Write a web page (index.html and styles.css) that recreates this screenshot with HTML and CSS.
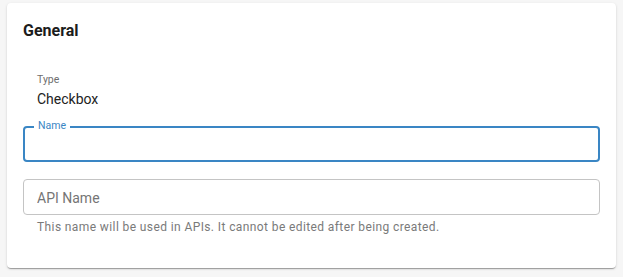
FILE: index.html
```html
<!DOCTYPE html>
<html>
<head>
<meta charset="utf-8">
<link rel="stylesheet" href="styles.css">
</head>
<body>
<div class="card">
  <h2 class="title">General</h2>
  <div class="static">
    <div class="static-label">Type</div>
    <div class="static-value">Checkbox</div>
  </div>
  <div class="field focused">
    <span class="field-label">Name</span>
    <input class="field-input" type="text">
  </div>
  <div class="field plain">
    <input class="field-input" type="text" placeholder="API Name">
  </div>
  <div class="helper">This name will be used in APIs. It cannot be edited after being created.</div>
</div>
</body>
</html>
```
FILE: styles.css
```css
html, body {
  margin: 0;
  padding: 0;
  background: #f6f6f6;
  font-family: Roboto, "Liberation Sans", Arial, sans-serif;
}
body {
  padding: 3px 7px;
}
.card {
  box-sizing: border-box;
  width: 609px;
  height: 265px;
  background: #fff;
  border-radius: 4px;
  box-shadow: 0 2px 1px -1px rgba(0,0,0,0.2), 0 1px 1px 0 rgba(0,0,0,0.14), 0 1px 3px 0 rgba(0,0,0,0.12);
  padding: 16px 16px 0 16px;
}
.title {
  margin: 0;
  font-size: 16px;
  line-height: 24px;
  font-weight: 700;
  color: #1c1c1c;
}
.static {
  margin-top: 30.5px;
  padding-left: 14px;
}
.static-label {
  font-size: 10.5px;
  line-height: 12px;
  color: #6e6e6e;
}
.static-value {
  margin-top: 3.5px;
  font-size: 14px;
  line-height: 20px;
  color: #222;
}
.field {
  position: relative;
  box-sizing: border-box;
  height: 36px;
  border-radius: 4px;
  display: flex;
  align-items: center;
}
.focused {
  margin-top: 17px;
  border: 2px solid #3a86c4;
}
.plain {
  margin-top: 17px;
  border: 1px solid #c4c4c4;
}
.field-label {
  position: absolute;
  top: -8px;
  left: 9px;
  padding: 0 4px;
  background: #fff;
  font-size: 10.5px;
  line-height: 12px;
  color: #3a86c4;
}
.field-input {
  border: none;
  outline: none;
  background: transparent;
  width: 100%;
  padding: 0 13px;
  font-family: inherit;
  font-size: 14px;
  line-height: 20px;
  color: #222;
}
.plain .field-input {
  padding-top: 1px;
}
.field-input::placeholder {
  color: #757575;
  opacity: 1;
}
.helper {
  margin-top: 4px;
  padding-left: 14px;
  font-size: 12px;
  line-height: 16px;
  letter-spacing: 0.033em;
  color: #7a7a7a;
}
```
